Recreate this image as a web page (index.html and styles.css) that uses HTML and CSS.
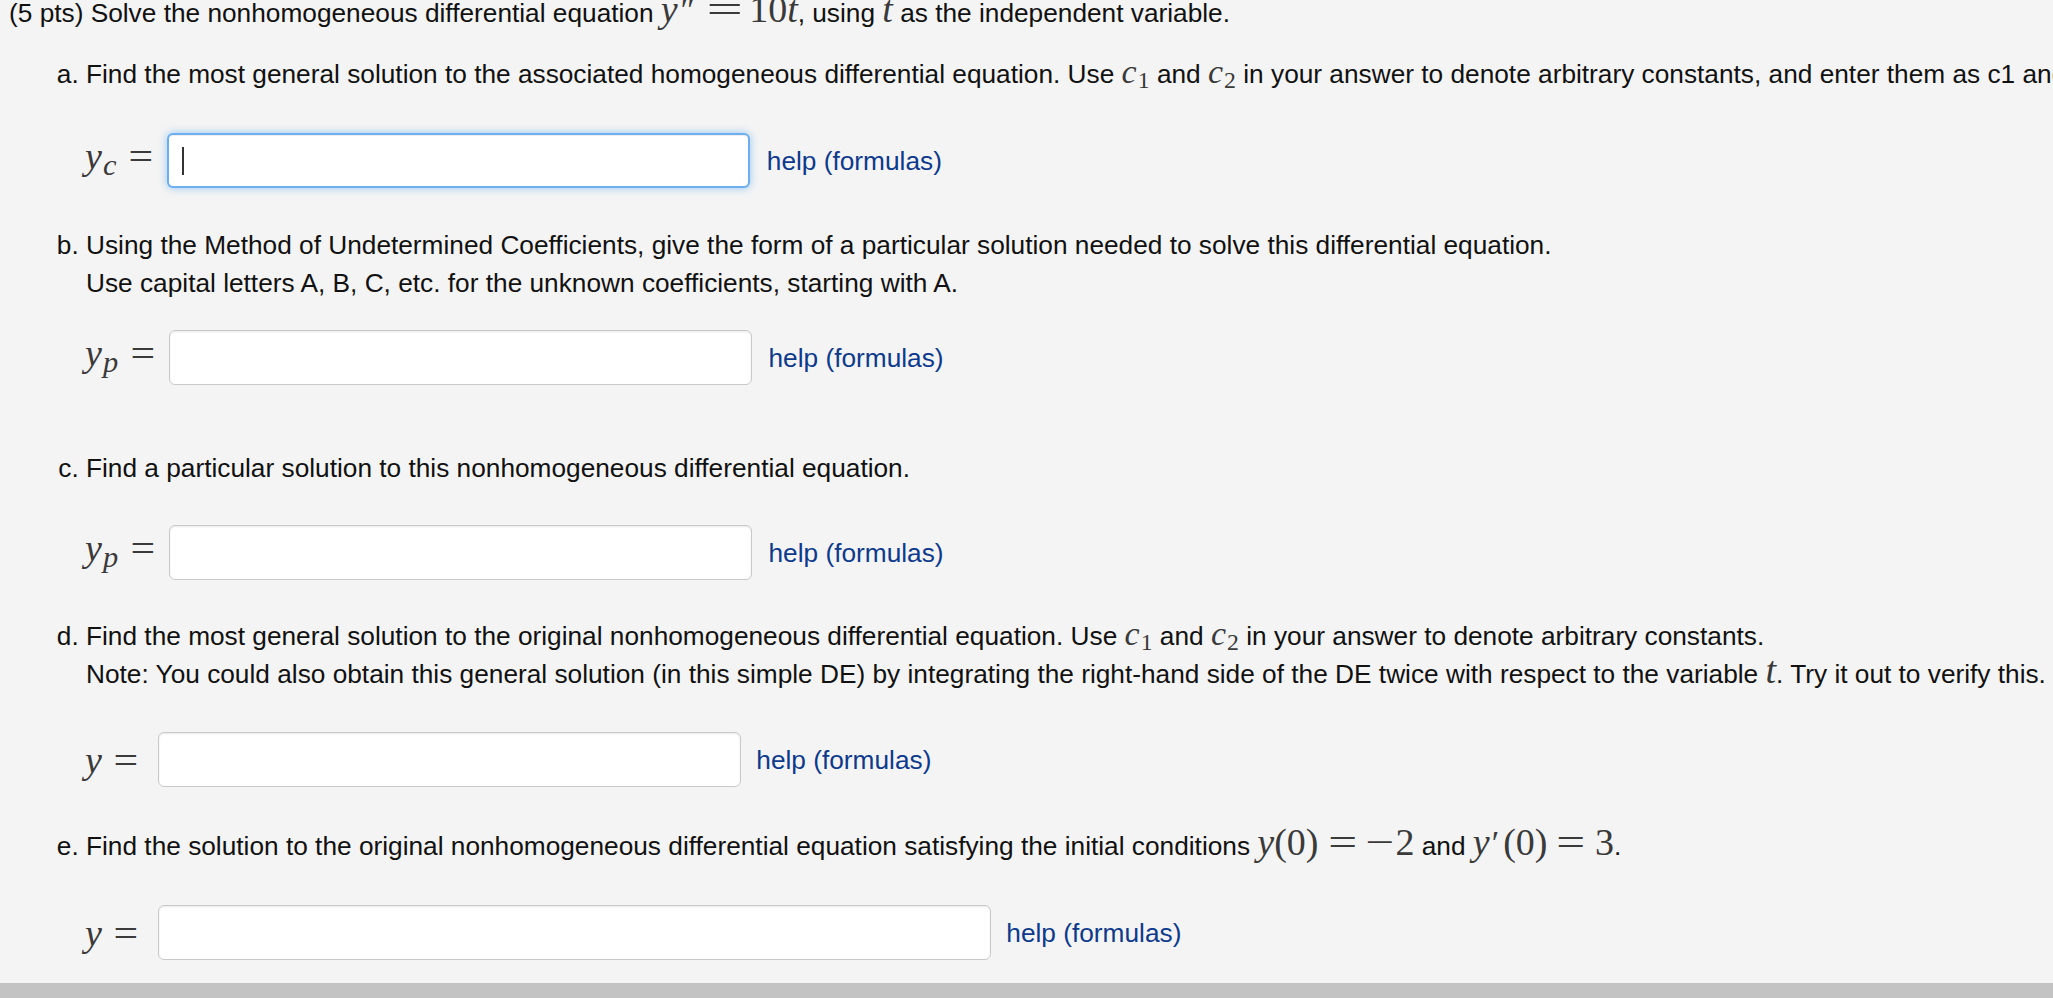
FILE: index.html
```html
<!DOCTYPE html>
<html lang="en">
<head>
<meta charset="utf-8">
<title>Nonhomogeneous differential equation</title>
<link rel="stylesheet" href="styles.css">
</head>
<body>
<div class="page">
  <p class="title">(5 pts) Solve the nonhomogeneous differential equation <span class="m m-big"><i>y</i><span class="pr">′′</span><span class="rel rel-long">=</span>10<i>t</i></span>, using <span class="m m-big"><i>t</i></span> as the independent variable.</p>
  <ol class="parts">
    <li class="part part-a">
      <p class="q">Find the most general solution to the associated homogeneous differential equation. Use <span class="m"><i>c</i><sub>1</sub></span> and <span class="m"><i>c</i><sub>2</sub></span> in your answer to denote arbitrary constants, and enter them as c1 and c2.</p>
      <div class="ans">
        <span class="m lbl"><i>y</i><sub><i>c</i></sub><span class="rel">=</span></span>
        <span class="field"><input class="box box-focus" type="text" aria-label="yc"><span class="caret"></span></span>
        <a class="help" href="#">help (formulas)</a>
      </div>
    </li>
    <li class="part">
      <p class="q">Using the Method of Undetermined Coefficients, give the form of a particular solution needed to solve this differential equation.<br>Use capital letters A, B, C, etc. for the unknown coefficients, starting with A.</p>
      <div class="ans ans-b">
        <span class="m lbl"><i>y</i><sub><i>p</i></sub><span class="rel">=</span></span>
        <input class="box" type="text" aria-label="yp form">
        <a class="help" href="#">help (formulas)</a>
      </div>
    </li>
    <li class="part part-c">
      <p class="q">Find a particular solution to this nonhomogeneous differential equation.</p>
      <div class="ans ans-c">
        <span class="m lbl"><i>y</i><sub><i>p</i></sub><span class="rel">=</span></span>
        <input class="box" type="text" aria-label="yp">
        <a class="help" href="#">help (formulas)</a>
      </div>
    </li>
    <li class="part part-d">
      <p class="q">Find the most general solution to the original nonhomogeneous differential equation. Use <span class="m"><i>c</i><sub>1</sub></span> and <span class="m"><i>c</i><sub>2</sub></span> in your answer to denote arbitrary constants.<br>Note: You could also obtain this general solution (in this simple DE) by integrating the right-hand side of the DE twice with respect to the variable <span class="m m-big"><i>t</i></span>. Try it out to verify this.</p>
      <div class="ans ans-d">
        <span class="m lbl lbl-y"><i>y</i><span class="rel">=</span></span>
        <input class="box" type="text" aria-label="y general">
        <a class="help help-near" href="#">help (formulas)</a>
      </div>
    </li>
    <li class="part part-e">
      <p class="q">Find the solution to the original nonhomogeneous differential equation satisfying the initial conditions <span class="m m-big"><i>y</i>(0)<span class="rel">=</span><span class="minus">−</span>2</span> and <span class="m m-big"><i>y</i><span class="pr1">′</span>(0)<span class="rel">=</span>3</span>.</p>
      <div class="ans">
        <span class="m lbl lbl-y"><i>y</i><span class="rel">=</span></span>
        <input class="box box-wide" type="text" aria-label="y particular">
        <a class="help help-near" href="#">help (formulas)</a>
      </div>
    </li>
  </ol>
</div>
<div class="hscroll"></div>
</body>
</html>
```
FILE: styles.css
```css
html, body {
  margin: 0;
  padding: 0;
}

body {
  height: 998px;
  display: flex;
  flex-direction: column;
  overflow: hidden;
  background: #f4f4f4;
  color: #111;
  font-family: "Liberation Sans", Arial, sans-serif;
  font-size: 26.25px;
  line-height: 38px;
}

.page {
  flex: 1;
  overflow: hidden;
  padding-left: 9px;
  white-space: nowrap;
}

.hscroll {
  flex: none;
  height: 15px;
  background: #c3c3c3;
}

.title {
  margin: -6px 0 0;
}

.parts {
  margin: 0;
  padding-left: 77px;
  list-style: lower-alpha;
}

.part {
  margin-top: 38px;
}

.part-a {
  margin-top: 23px;
}

.part-c {
  margin-top: 64px;
}

.part-d {
  margin-top: 37px;
}

.part-e {
  margin-top: 40px;
}

.q {
  margin: 0;
}

/* math */
.m {
  font-family: "Liberation Serif", "Times New Roman", serif;
  font-size: 34px;
  line-height: 0;
  color: #3a3a3a;
}

.m i {
  font-style: italic;
}

.m sub {
  font-size: 0.7em;
  line-height: 0;
  vertical-align: -0.22em;
  margin-left: 1px;
}

.m-big {
  font-size: 38px;
}

.pr {
  font-size: 0.9em;
  vertical-align: 0.04em;
  margin-left: 3px;
  letter-spacing: -1px;
}

.pr1 {
  font-size: 0.9em;
  vertical-align: 0.04em;
  margin: 0 4px 0 2px;
}

.rel {
  display: inline-block;
  transform: scaleX(1.35);
  margin: 0 13px;
}

.rel-long {
  transform: scaleX(1.7);
  margin: 0 14px 0 20px;
}

.minus {
  display: inline-block;
  transform: scaleX(1.35);
  margin: 0 5px 0 3px;
}

/* answer rows */
.ans {
  display: flex;
  align-items: center;
  height: 55px;
  margin-top: 40px;
  margin-left: -1px;
}

.ans-b {
  margin-top: 28px;
}

.ans-c {
  margin-top: 38px;
}

.ans-d {
  margin-top: 39px;
}

.lbl {
  font-size: 38px;
}

.lbl sub {
  font-size: 0.8em;
  margin-left: 1px;
}

.lbl .rel {
  transform: scaleX(1.15);
  margin: 0 15px 0 14px;
}

.lbl-y .rel {
  margin: 0 22px 0 13px;
}

.field {
  position: relative;
  display: flex;
}

.box {
  box-sizing: border-box;
  width: 583px;
  height: 55px;
  margin: 0;
  padding: 6px 14px;
  border: 1px solid #c9c9c9;
  border-radius: 6px;
  background: #fff;
  box-shadow: inset 0 1px 2px rgba(0, 0, 0, 0.09);
  font: 26px "Liberation Sans", Arial, sans-serif;
  outline: none;
}

.box-focus {
  border: 2px solid rgba(82, 160, 236, 0.85);
  box-shadow: inset 0 1px 1px rgba(0, 0, 0, 0.075), 0 0 8px rgba(82, 168, 236, 0.6);
}

.box-wide {
  width: 833px;
}

.caret {
  position: absolute;
  left: 15px;
  top: 14px;
  width: 2px;
  height: 28px;
  background: #333;
}

.help {
  margin-left: 17px;
  color: #0d3a8c;
  text-decoration: none;
  font-size: 26.25px;
}

.help-near {
  margin-left: 15px;
}
```
